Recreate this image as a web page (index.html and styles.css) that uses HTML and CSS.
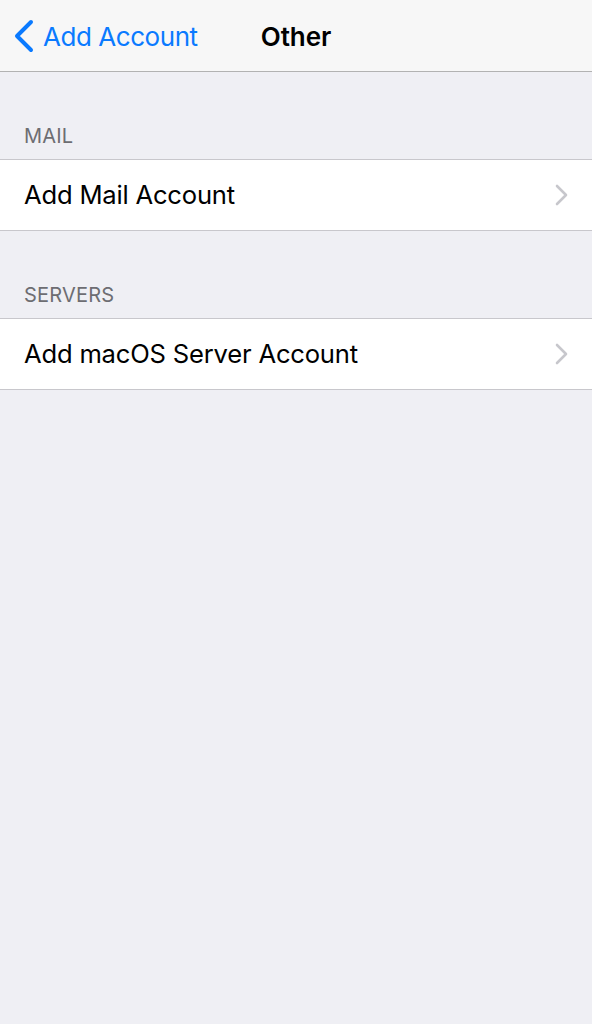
FILE: index.html
```html
<!DOCTYPE html>
<html lang="en">
<head>
  <meta charset="UTF-8" />
  <meta name="viewport" content="width=device-width, initial-scale=1.0"/>
  <title>Other</title>
  <link rel="stylesheet" href="styles.css">
</head>
<body>
  <header class="navbar">
    <a class="back" href="#">
      <svg class="back-icon" width="22" height="34" viewBox="0 0 22 34">
        <path d="M19 3 L5 17 L19 31" fill="none" stroke="#0a7aff" stroke-width="4" stroke-linecap="round" stroke-linejoin="round"/>
      </svg>
      <span>Add Account</span>
    </a>
    <h1 class="title">Other</h1>
  </header>

  <div class="section">
    <div class="section-header">MAIL</div>
    <div class="group">
      <a class="row" href="#">
        <span>Add Mail Account</span>
        <svg class="chevron" width="14" height="22" viewBox="0 0 14 22">
          <path d="M2 2 L11 11 L2 20" fill="none" stroke="#c7c7cc" stroke-width="2.6" stroke-linecap="round" stroke-linejoin="round"/>
        </svg>
      </a>
    </div>
  </div>

  <div class="section">
    <div class="section-header">SERVERS</div>
    <div class="group">
      <a class="row" href="#">
        <span>Add macOS Server Account</span>
        <svg class="chevron" width="14" height="22" viewBox="0 0 14 22">
          <path d="M2 2 L11 11 L2 20" fill="none" stroke="#c7c7cc" stroke-width="2.6" stroke-linecap="round" stroke-linejoin="round"/>
        </svg>
      </a>
    </div>
  </div>
</body>
</html>
```

FILE: styles.css
```css
body {
  margin: 0;
  padding: 0;
  font-family: Inter, 'Liberation Sans', sans-serif;
  background-color: #efeff4;
  min-height: 1024px;
}

a {
  text-decoration: none;
  color: inherit;
}

.navbar {
  position: relative;
  height: 71px;
  background-color: #f7f7f7;
  border-bottom: 1px solid #b2b2b2;
  display: flex;
  align-items: center;
  justify-content: center;
}

.back {
  position: absolute;
  left: 12px;
  top: 0;
  height: 71px;
  display: flex;
  align-items: center;
  color: #0a7aff;
  font-size: 26px;
  letter-spacing: -0.45px;
}

.back span {
  margin-top: 2px;
}

.back-icon {
  margin-right: 9px;
  margin-top: 1px;
}

.title {
  margin: 0 0 -2px;
  font-size: 26px;
  font-weight: 600;
  color: #000;
  letter-spacing: -0.1px;
}

.section-header {
  height: 87px;
  box-sizing: border-box;
  display: flex;
  align-items: flex-end;
  padding: 0 24px 11px;
  font-size: 20px;
  color: #6d6d72;
  letter-spacing: 0.2px;
}

.group {
  background-color: #fff;
  border-top: 1px solid #c8c7cc;
  border-bottom: 1px solid #c8c7cc;
}

.row {
  height: 70px;
  display: flex;
  align-items: center;
  justify-content: space-between;
  padding: 0 23px 0 24px;
  font-size: 25.6px;
  color: #000;
  letter-spacing: -0.2px;
}

.row span {
  margin-top: -2px;
}
```
